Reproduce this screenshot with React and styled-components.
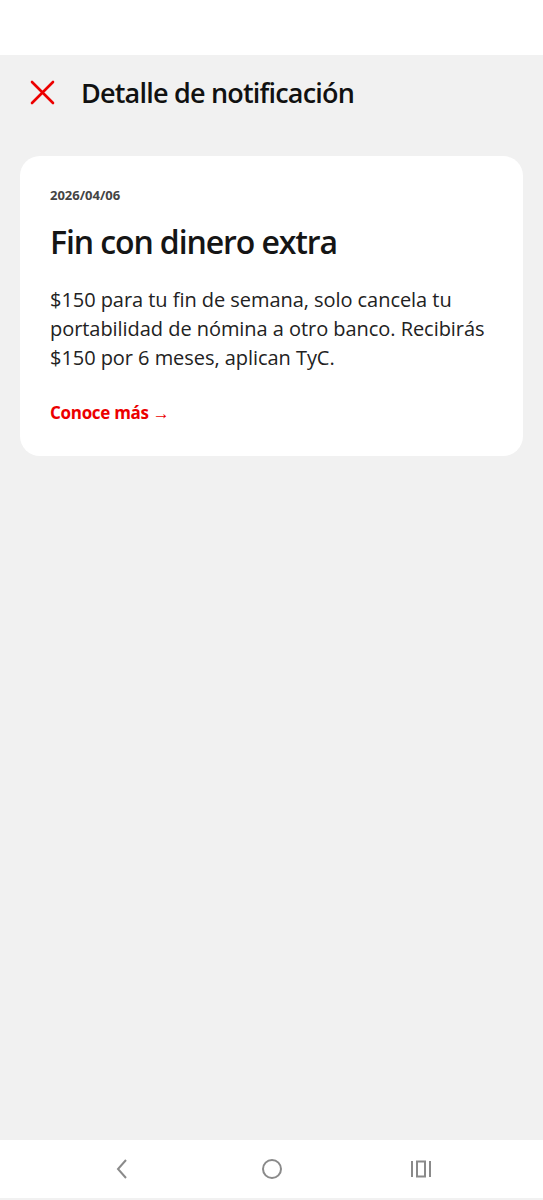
import styled, { createGlobalStyle } from "styled-components";

const Global = createGlobalStyle`
  html, body {
    margin: 0;
    padding: 0;
    background: #f1f1f1;
  }
  body {
    font-family: "Open Sans", "Noto Sans", sans-serif;
  }
`;

const Screen = styled.div`
  display: flex;
  flex-direction: column;
  width: 543px;
  height: 1200px;
  background: #f1f1f1;
`;

const StatusBar = styled.div`
  height: 55px;
  background: #fff;
  flex-shrink: 0;
`;

const Header = styled.div`
  display: flex;
  align-items: center;
  gap: 26px;
  height: 74px;
  padding: 0 0 0 30px;
`;

const CloseBtn = styled.button`
  display: flex;
  align-items: center;
  justify-content: center;
  width: 25px;
  height: 25px;
  padding: 0;
  border: none;
  background: none;
  color: #ec0000;
`;

const Title = styled.h1`
  margin: 0;
  font-size: 27px;
  font-weight: 600;
  color: #111;
  letter-spacing: -0.8px;
`;

const Main = styled.main`
  flex: 1;
  padding: 27px 20px 0;
`;

const Card = styled.section`
  display: flex;
  flex-direction: column;
  align-items: flex-start;
  background: #fff;
  border-radius: 20px;
  padding: 30px 30px 28px;
  height: 300px;
  box-sizing: border-box;
`;

const Date = styled.span`
  font-size: 13px;
  font-weight: 700;
  color: #444;
`;

const CardTitle = styled.h2`
  margin: 16px 0 0;
  font-size: 32px;
  font-weight: 600;
  color: #151515;
  letter-spacing: -1.1px;
`;

const Body = styled.p`
  margin: 22px 0 0;
  font-size: 20px;
  line-height: 29px;
  color: #222;
  letter-spacing: -0.05px;
`;

const Link = styled.a`
  margin-top: 29px;
  font-size: 17px;
  font-weight: 700;
  color: #ec0000;
  text-decoration: none;
  letter-spacing: -0.3px;
`;

const NavBar = styled.nav`
  display: flex;
  align-items: center;
  justify-content: center;
  gap: 125px;
  height: 58px;
  background: #fff;
  margin-bottom: 2px;
  flex-shrink: 0;
`;

const NavIcon = styled.svg`
  width: 24px;
  height: 24px;
  stroke: #8a8a8a;
  fill: none;
  stroke-width: 2;
`;

export default function App() {
  return (
    <Screen>
      <Global />
      <StatusBar />
      <Header>
        <CloseBtn aria-label="Cerrar">
          <svg width="25" height="25" viewBox="0 0 25 25" fill="none" stroke="currentColor" strokeWidth="2.6" strokeLinecap="round">
            <path d="M2 2 L23 23 M23 2 L2 23" />
          </svg>
        </CloseBtn>
        <Title>Detalle de notificación</Title>
      </Header>
      <Main>
        <Card>
          <Date>2026/04/06</Date>
          <CardTitle>Fin con dinero extra</CardTitle>
          <Body>
            $150 para tu fin de semana, solo cancela tu portabilidad de nómina a otro banco. Recibirás $150 por 6 meses, aplican TyC.
          </Body>
          <Link href="#">Conoce más →</Link>
        </Card>
      </Main>
      <NavBar>
        <NavIcon viewBox="0 0 24 24">
          <path d="M15 3 L7 12 L15 21" />
        </NavIcon>
        <NavIcon viewBox="0 0 24 24">
          <circle cx="12" cy="12" r="9" />
        </NavIcon>
        <NavIcon viewBox="0 0 24 24">
          <path d="M3 4 V20 M21 4 V20" />
          <rect x="8" y="4.5" width="8" height="15" />
        </NavIcon>
      </NavBar>
    </Screen>
  );
}
